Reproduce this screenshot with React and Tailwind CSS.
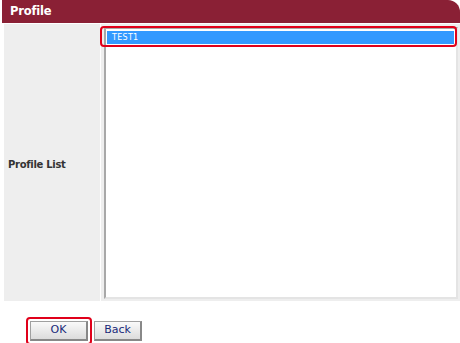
import React from "react";

export default function App() {
  const font = { fontFamily: '"DejaVu Sans", Verdana, sans-serif' };
  return (
    <div className="w-[460px] h-[343px] bg-white overflow-hidden" style={font}>
      <div className="ml-[2px] h-[23px] bg-[#8a2035] rounded-tr-[12px] flex items-center pl-[8px]">
        <span className="text-white font-bold text-[11.5px] tracking-[-0.2px]">Profile</span>
      </div>
      <div className="flex ml-[4px] mt-[1px] h-[277px]">
        <div className="w-[96px] bg-[#eeeeee] flex items-center pl-[4px]">
          <span className="text-[#333333] font-bold text-[10px] tracking-[-0.3px] mt-[3px]">Profile List</span>
        </div>
        <div className="flex-1 bg-[#eeeeee] ml-[1px] pl-[3px] pt-[3px] pb-[2px] pr-[2px] flex">
          <div className="relative flex-1 bg-white border-l-2 border-t-2 border-[#a8a8a8] border-r-2 border-r-[#e4e4e4] border-b-2 border-b-[#e4e4e4] pt-[2px] px-[1px]">
            <div className="h-[13px] bg-[#3399ff] text-white text-[8px] tracking-[0.3px] flex items-center pl-[5px] mr-[1px]">
              TEST1
            </div>
            <div className="absolute left-[-6px] top-[-3px] w-[357px] h-[21px] border-2 border-[#e0001a] rounded-[4px]"></div>
          </div>
        </div>
      </div>
      <div className="flex items-center mt-[16px] ml-[26px] gap-[2px]">
        <div className="p-[2px] border-2 border-[#e0001a] rounded-[4px]">
          <button className="w-[58px] h-[20px] bg-gradient-to-b from-[#fafafa] to-[#dcdcdc] border border-[#a0a0a0] border-r-2 border-b-2 border-r-[#888] border-b-[#888] text-[#1a2a7a] text-[11px] flex items-center justify-center">
            OK
          </button>
        </div>
        <button className="w-[48px] h-[20px] bg-gradient-to-b from-[#fafafa] to-[#dcdcdc] border border-[#a0a0a0] border-r-2 border-b-2 border-r-[#888] border-b-[#888] text-[#1a2a7a] text-[11px] flex items-center justify-center">
          Back
        </button>
      </div>
    </div>
  );
}
